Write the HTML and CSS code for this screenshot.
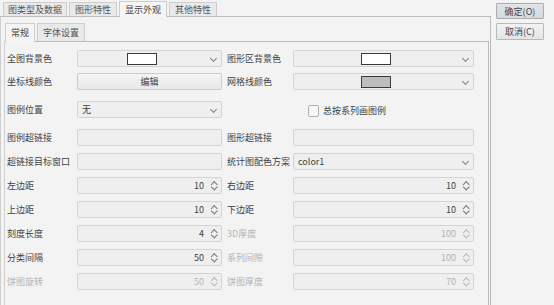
FILE: index.html
```html
<!DOCTYPE html>
<html lang="zh">
<head>
  <meta charset="UTF-8" />
  <title>显示外观</title>
  <link rel="stylesheet" href="styles.css">
</head>
<body>

<div class="dialog">
  <div class="main">
    <div class="tabs outer-tabs">
      <div class="tab">图类型及数据</div>
      <div class="tab">图形特性</div>
      <div class="tab active">显示外观</div>
      <div class="tab">其他特性</div>
    </div>

    <div class="outer-panel">
      <div class="tabs inner-tabs">
        <div class="tab active">常规</div>
        <div class="tab">字体设置</div>
      </div>

      <div class="inner-panel">
        <div class="form">
          <!-- 1 -->
          <div class="lbl">全图背景色</div>
          <div class="field combo"><span class="swatch"></span><span class="chev"></span></div>
          <div class="lbl right">图形区背景色</div>
          <div class="field combo"><span class="swatch"></span><span class="chev"></span></div>

          <!-- 2 -->
          <div class="lbl">坐标线颜色</div>
          <div class="field btn-edit">编辑</div>
          <div class="lbl right">网格线颜色</div>
          <div class="field combo"><span class="swatch gray"></span><span class="chev"></span></div>

          <!-- 3 -->
          <div class="lbl">图例位置</div>
          <div class="field select"><span class="val">无</span><span class="chev"></span></div>
          <div class="check-row">
            <span class="checkbox"></span>
            <span>总按系列画图例</span>
          </div>

          <!-- 4 -->
          <div class="lbl">图例超链接</div>
          <div class="field"></div>
          <div class="lbl right">图形超链接</div>
          <div class="field"></div>

          <!-- 5 -->
          <div class="lbl">超链接目标窗口</div>
          <div class="field"></div>
          <div class="lbl right">统计图配色方案</div>
          <div class="field select"><span class="val">color1</span><span class="chev"></span></div>

          <!-- 6 -->
          <div class="lbl">左边距</div>
          <div class="field spin"><span class="num">10</span><span class="arrows"></span></div>
          <div class="lbl right">右边距</div>
          <div class="field spin"><span class="num">10</span><span class="arrows"></span></div>

          <!-- 7 -->
          <div class="lbl">上边距</div>
          <div class="field spin"><span class="num">10</span><span class="arrows"></span></div>
          <div class="lbl right">下边距</div>
          <div class="field spin"><span class="num">10</span><span class="arrows"></span></div>

          <!-- 8 -->
          <div class="lbl">刻度长度</div>
          <div class="field spin"><span class="num">4</span><span class="arrows"></span></div>
          <div class="lbl right off">3D厚度</div>
          <div class="field spin off"><span class="num">100</span><span class="arrows"></span></div>

          <!-- 9 -->
          <div class="lbl">分类间隔</div>
          <div class="field spin"><span class="num">50</span><span class="arrows"></span></div>
          <div class="lbl right off">系列间隙</div>
          <div class="field spin off"><span class="num">100</span><span class="arrows"></span></div>

          <!-- 10 -->
          <div class="lbl off">饼图旋转</div>
          <div class="field spin off"><span class="num">50</span><span class="arrows"></span></div>
          <div class="lbl right off">饼图厚度</div>
          <div class="field spin off"><span class="num">70</span><span class="arrows"></span></div>
        </div>
      </div>
    </div>
  </div>

  <div class="side">
    <button class="btn focus">确定(O)</button>
    <button class="btn">取消(C)</button>
  </div>
</div>

</body>
</html>
```

FILE: styles.css
```css
* { box-sizing: border-box; }
body {
  margin: 0;
  background: #f3f3f3;
  font-family: "Noto Sans CJK SC", "Liberation Sans", sans-serif;
  font-size: 9px;
  color: #3f3f3f;
  overflow: hidden;
}
.dialog {
  display: flex;
  gap: 5px;
  height: 305px;
}
.main {
  width: 491px;
  display: flex;
  flex-direction: column;
}

/* tabs */
.tabs {
  display: flex;
  align-items: flex-end;
}
.tab {
  border: 1px solid #cdcdcd;
  border-bottom: none;
  background: #e9e9e9;
  color: #555;
  line-height: 14px;
  padding: 0 5px;
  position: relative;
}
.tab.active {
  background: #f5f5f5;
  color: #444;
  z-index: 1;
}
.outer-tabs {
  height: 16px;
  padding-left: 3px;
  gap: 2px;
}
.outer-tabs .tab { height: 14px; }
.outer-tabs .tab:first-child { padding: 0 4px; }
.outer-tabs .tab.active { height: 16px; margin-bottom: -1px; padding-top: 1px; }
.outer-panel {
  flex: 1;
  border-top: 1px solid #bcbcbc;
  border-left: 1px solid #cfcfcf;
  border-right: 1px solid #bcbcbc;
  padding: 5px 1px 0 3px;
  display: flex;
  flex-direction: column;
}
.inner-tabs {
  height: 19px;
  padding-left: 1px;
  gap: 2px;
}
.inner-tabs .tab { height: 18px; line-height: 17px; padding: 0 5px; }
.inner-tabs .tab.active { height: 19px; margin-bottom: -1px; }
.inner-panel {
  flex: 1;
  border-top: 1px solid #bcbcbc;
  border-left: 1px solid #cfcfcf;
  border-right: 1px solid #bcbcbc;
  padding: 8px 0 0 2px;
}

/* form grid */
.form {
  display: grid;
  grid-template-columns: 70px 145px 71px 181px;
  grid-template-rows: 23px 28px 28px 24px 24px 24px 24px 24px 24px 24px;
}
.lbl {
  height: 17px;
  line-height: 17px;
  white-space: nowrap;
}
.lbl.right { padding-left: 5px; }
.off { color: #b4b4b4; }

.field {
  height: 17px;
  border: 1px solid #d3d3d3;
  border-radius: 2px;
  background: #efefef;
  display: flex;
  align-items: center;
}

.combo { justify-content: center; padding-right: 15px; position: relative; }
.swatch {
  width: 30px;
  height: 12px;
  border: 1px solid #3a3a3a;
  background: #fff;
}
.swatch.gray { background: #bdbdbd; }
.chev {
  position: absolute;
  right: 5px;
  top: 5px;
  width: 5px;
  height: 5px;
  border-right: 1.2px solid #808080;
  border-bottom: 1.2px solid #808080;
  transform: rotate(45deg);
}
.select { position: relative; padding-left: 4px; }
.btn-edit {
  justify-content: center;
  background: linear-gradient(#f4f4f4, #e9e9e9);
  border-color: #cbcbcb;
}

.check-row {
  grid-column: 3 / 5;
  display: flex;
  align-items: center;
  gap: 4px;
  padding-left: 86px;
  height: 17px;
  margin-top: 1px;
}
.checkbox {
  width: 11px;
  height: 12px;
  border: 1px solid #b2b2b2;
  border-radius: 2px;
  background: #f7f7f7;
}

.spin { justify-content: flex-end; padding-right: 3px; }
.spin .num { margin-right: 6px; }
.arrows {
  width: 8px;
  height: 11px;
  position: relative;
}
.arrows::before,
.arrows::after {
  content: "";
  position: absolute;
  left: 1.5px;
  width: 3.5px;
  height: 3.5px;
  border-left: 1.2px solid #777;
  border-top: 1.2px solid #777;
}
.arrows::before { top: 1.5px; transform: rotate(45deg); }
.arrows::after { top: 5px; transform: rotate(225deg); }
.spin.off { color: #b4b4b4; }
.spin.off .arrows::before,
.spin.off .arrows::after { border-color: #b8b8b8; }

/* side buttons */
.side {
  display: flex;
  flex-direction: column;
  gap: 4px;
  padding-top: 3px;
}
.btn {
  width: 48px;
  height: 16px;
  padding: 0;
  font-family: inherit;
  font-size: 9px;
  color: #444;
  border: 1px solid #b9b9b9;
  border-radius: 1px;
  background: linear-gradient(#f2f2f2, #e4e4e4);
}
.btn.focus {
  background: linear-gradient(#e2e4e7, #d6d9dd);
  border-color: #a9adb2;
}
.side .btn + .btn { height: 17px; }
```
